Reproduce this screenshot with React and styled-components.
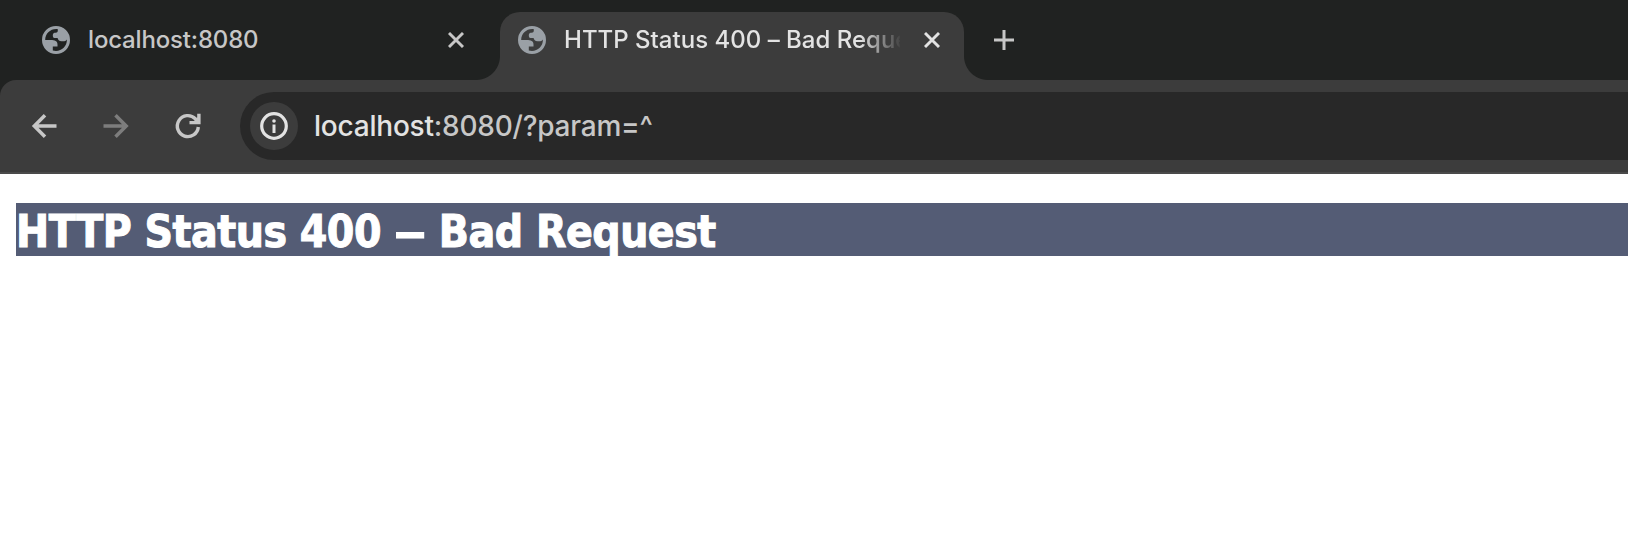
import React from "react";
import styled, { createGlobalStyle } from "styled-components";

const GlobalStyle = createGlobalStyle`
  * { box-sizing: border-box; }
  body { margin: 0; background: #fff; overflow: hidden; }
`;

const ui = `Inter, "Liberation Sans", sans-serif`;

const Window = styled.div`
  width: 100%;
  height: 536px;
  overflow: hidden;
  background: #fff;
`;

const Chrome = styled.header`
  background: #202221;
`;

const TabStrip = styled.div`
  height: 80px;
  display: flex;
  align-items: flex-end;
`;

const Tab = styled.div`
  position: relative;
  width: ${(p) => (p.$active ? 464 : 500)}px;
  height: 68px;
  padding: 0 20px 12px ${(p) => (p.$active ? 18 : 42)}px;
  display: flex;
  align-items: center;
  border-radius: 20px 20px 0 0;
  background: ${(p) => (p.$active ? "#3c3c3c" : "transparent")};
  color: ${(p) => (p.$active ? "#e3e3e3" : "#c7c7c7")};
`;

const Flare = styled.span`
  position: absolute;
  bottom: 0;
  ${(p) => p.$side}: -24px;
  width: 24px;
  height: 24px;
  background: radial-gradient(
    circle at ${(p) => (p.$side === "left" ? "0 0" : "100% 0")},
    transparent 23.5px,
    #3c3c3c 24.5px
  );
`;

const TabTitle = styled.span`
  flex: none;
  width: ${(p) => (p.$fade ? 336 : 340)}px;
  margin-left: 18px;
  overflow: hidden;
  white-space: nowrap;
  font: 450 24px/32px ${ui};
  letter-spacing: ${(p) => p.$tracking}px;
  ${(p) => p.$fade && "mask-image: linear-gradient(to right, #000 296px, transparent 338px);"}
`;

const CloseSlot = styled.span`
  width: 16px;
  height: 16px;
  margin-left: ${(p) => p.$gap}px;
  display: flex;
  flex: none;
`;

const NewTab = styled.div`
  height: 68px;
  padding: 0 0 12px 30px;
  display: flex;
  align-items: center;
`;

const Toolbar = styled.div`
  height: 94px;
  padding: 12px 0 12px 30px;
  display: flex;
  align-items: center;
  background: #3c3c3c;
  border-top-left-radius: 16px;
  border-bottom: 2px solid #4a4a4a;
`;

const NavIcon = styled.span`
  width: 28px;
  height: 28px;
  margin-right: ${(p) => p.$gap}px;
  display: flex;
  flex: none;
`;

const AddressBar = styled.div`
  flex: 1;
  height: 68px;
  padding-left: 10px;
  display: flex;
  align-items: center;
  background: #282828;
  border-radius: 34px 0 0 34px;
`;

const SiteInfo = styled.span`
  width: 48px;
  height: 48px;
  display: flex;
  align-items: center;
  justify-content: center;
  border-radius: 50%;
  background: #3c3c3c;
`;

const Url = styled.span`
  margin-left: 16px;
  font: 450 28px/40px ${ui};
  letter-spacing: -0.22px;
  white-space: nowrap;
  color: #c7c7c7;
`;

const Host = styled.span`
  color: #e3e3e3;
`;

const Page = styled.main`
  padding: 29px 0 0 16px;
`;

const Heading = styled.h1`
  margin: 0;
  height: 53px;
  background: #545c75;
  color: #fff;
  font: 700 44px/57px "DejaVu Sans Condensed", "DejaVu Sans", sans-serif;
  font-stretch: condensed;
  letter-spacing: -0.48px;
  -webkit-text-stroke: 1px #fff;
  white-space: nowrap;
`;

const Dash = styled.span`
  display: inline-block;
  margin: 0 6px;
  transform: scaleX(1.7);
`;

const Globe = () => (
  <svg width="28" height="28" viewBox="0 0 28 28">
    <path
      fill="#9aa0a6"
      fillRule="evenodd"
      d="M14 0a14 14 0 1 1 0 28a14 14 0 0 1 0-28zM3.2 14H8.500C13 14 15.500 15 15.500 18.500V20.500H10.800V24.600C18 26.600 25 21.500 24.900 13.600C24 15.300 22 15.500 19.500 15.300C17 15 16 13.800 15.600 12H12.500C11 12 10.800 10.500 10.800 9C10.800 7.300 12 6.800 13.500 6.800C15.500 6.800 16 5.500 15.800 3.200C8.500 2.400 3.200 7.700 3.200 14z"
    />
  </svg>
);

const Cross = () => (
  <svg width="16" height="16" viewBox="0 0 16 16" fill="none" stroke="currentColor" strokeWidth="2.9">
    <path d="M1 1L15 15M15 1L1 15" />
  </svg>
);

const Plus = () => (
  <svg width="20" height="20" viewBox="0 0 20 20" fill="none" stroke="#c7c7c7" strokeWidth="3">
    <path d="M10 0V20M0 10H20" />
  </svg>
);

const Arrow = ({ forward }) => (
  <svg width="28" height="28" viewBox="0 0 28 28" fill="none" stroke={forward ? "#7d7d7d" : "#c7c7c7"} strokeWidth="3.5">
    <path d={forward ? "M1.500 14H24M13.500 3.300L24.200 14L13.500 24.700" : "M26.500 14H4M15 3.300L4.300 14L15 24.700"} />
  </svg>
);

const Reload = () => (
  <svg width="28" height="28" viewBox="0 0 28 28" fill="none" stroke="#c7c7c7" strokeWidth="3.4">
    <path d="M24.300 15A10.500 10.500 0 1 1 21.300 6.700L23.500 9.200" />
    <path d="M24.900 1.800V10.600H15.500" />
    <path fill="#c7c7c7" stroke="none" d="M19 10L24 5V10z" />
  </svg>
);

const Info = () => (
  <svg width="28" height="28" viewBox="0 0 28 28">
    <circle cx="14" cy="14" r="12.300" fill="none" stroke="#e3e3e3" strokeWidth="3.2" />
    <path fill="#e3e3e3" d="M12.500 12.500h3v8.500h-3z" />
    <circle cx="14" cy="9" r="1.800" fill="#e3e3e3" />
  </svg>
);

export default function App() {
  return (
    <Window>
      <GlobalStyle />
      <Chrome>
        <TabStrip>
          <Tab>
            <Globe />
            <TabTitle $tracking={-0.17}>localhost:8080</TabTitle>
            <CloseSlot $gap={20}><Cross /></CloseSlot>
          </Tab>
          <Tab $active>
            <Flare $side="left" />
            <Flare $side="right" />
            <Globe />
            <TabTitle $fade $tracking={0.01}>HTTP Status 400 – Bad Request</TabTitle>
            <CloseSlot $gap={24}><Cross /></CloseSlot>
          </Tab>
          <NewTab><Plus /></NewTab>
        </TabStrip>
        <Toolbar>
          <NavIcon $gap={44}><Arrow /></NavIcon>
          <NavIcon $gap={44}><Arrow forward /></NavIcon>
          <NavIcon $gap={38}><Reload /></NavIcon>
          <AddressBar>
            <SiteInfo><Info /></SiteInfo>
            <Url><Host>localhost</Host>:8080/?param=^</Url>
          </AddressBar>
        </Toolbar>
      </Chrome>
      <Page>
        <Heading>HTTP Status 400 <Dash>–</Dash> Bad Request</Heading>
      </Page>
    </Window>
  );
}
